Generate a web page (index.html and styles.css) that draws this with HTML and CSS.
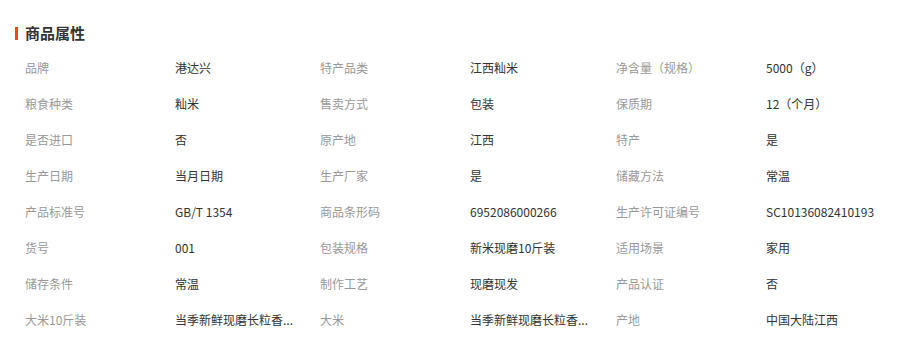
FILE: index.html
```html
<!DOCTYPE html>
<html lang="zh-CN">
<head>
<meta charset="utf-8">
<title>商品属性</title>
<link rel="stylesheet" href="styles.css">
</head>
<body>
<section class="attrs">
  <h2 class="attrs-title">商品属性</h2>
  <div class="attrs-grid">
    <span class="k">品牌</span><span class="v">港达兴</span>
    <span class="k">特产品类</span><span class="v">江西籼米</span>
    <span class="k">净含量（规格）</span><span class="v">5000（g）</span>

    <span class="k">粮食种类</span><span class="v">籼米</span>
    <span class="k">售卖方式</span><span class="v">包装</span>
    <span class="k">保质期</span><span class="v">12（个月）</span>

    <span class="k">是否进口</span><span class="v">否</span>
    <span class="k">原产地</span><span class="v">江西</span>
    <span class="k">特产</span><span class="v">是</span>

    <span class="k">生产日期</span><span class="v">当月日期</span>
    <span class="k">生产厂家</span><span class="v">是</span>
    <span class="k">储藏方法</span><span class="v">常温</span>

    <span class="k">产品标准号</span><span class="v">GB/T 1354</span>
    <span class="k">商品条形码</span><span class="v">6952086000266</span>
    <span class="k">生产许可证编号</span><span class="v">SC10136082410193</span>

    <span class="k">货号</span><span class="v">001</span>
    <span class="k">包装规格</span><span class="v">新米现磨10斤装</span>
    <span class="k">适用场景</span><span class="v">家用</span>

    <span class="k">储存条件</span><span class="v">常温</span>
    <span class="k">制作工艺</span><span class="v">现磨现发</span>
    <span class="k">产品认证</span><span class="v">否</span>

    <span class="k">大米10斤装</span><span class="v">当季新鲜现磨长粒香...</span>
    <span class="k">大米</span><span class="v">当季新鲜现磨长粒香...</span>
    <span class="k">产地</span><span class="v">中国大陆江西</span>
  </div>
</section>
</body>
</html>
```
FILE: styles.css
```css
html, body {
  margin: 0;
  padding: 0;
  background: #fff;
}
body {
  font-family: "Noto Sans CJK SC", "Liberation Sans", sans-serif;
  font-size: 12px;
  color: #333;
}
.attrs {
  padding: 23px 0 0 15px;
}
.attrs-title {
  margin: 0;
  display: flex;
  align-items: center;
  gap: 7px;
  height: 20px;
  font-size: 15px;
  font-weight: bold;
  line-height: 20px;
  color: #333;
}
.attrs-title::before {
  content: "";
  width: 3px;
  height: 13px;
  background: #ff4400;
}
.attrs-grid {
  margin-top: 7px;
  padding-left: 10px;
  display: grid;
  grid-template-columns: 150px 145px 150px 146px 150px 1fr;
  grid-auto-rows: 36px;
  align-items: center;
}
.k {
  color: #999;
  white-space: nowrap;
  line-height: 16px;
}
.v {
  color: #333;
  white-space: nowrap;
  line-height: 16px;
}
```
